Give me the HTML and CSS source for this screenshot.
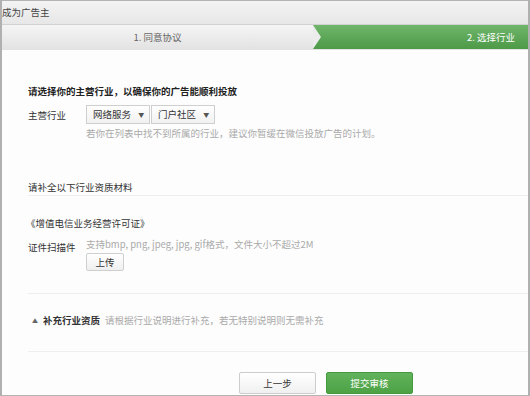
FILE: index.html
```html
<!DOCTYPE html>
<html lang="zh-CN">
  <head>
    <meta charset="UTF-8" />
    <title>成为广告主</title>
    <link rel="stylesheet" href="styles.css">
  </head>
  <body>
    <div class="window">
      <div class="titlebar">成为广告主</div>
      <div class="steps">
        <div class="step step-done">1. 同意协议</div>
        <div class="step step-current">2. 选择行业</div>
      </div>

      <div class="content">
        <div class="heading">请选择你的主营行业，以确保你的广告能顺利投放</div>
        <div class="field">
          <span class="label">主营行业</span>
          <div class="selects">
            <div class="select">网络服务 <span class="caret">▼</span></div>
            <div class="select">门户社区 <span class="caret">▼</span></div>
          </div>
        </div>
        <div class="hint indent">若你在列表中找不到所属的行业，建议你暂缓在微信投放广告的计划。</div>

        <div class="section-title">请补全以下行业资质材料</div>

        <div class="upload-block">
          <div class="license">《增值电信业务经营许可证》</div>
          <div class="field field-top">
            <span class="label label-scan">证件扫描件</span>
            <div class="upload-col">
              <div class="hint">支持bmp, png, jpeg, jpg, gif格式，文件大小不超过2M</div>
              <button class="btn-small">上传</button>
            </div>
          </div>
        </div>

        <div class="extra">
          <span class="up-arrow">▲</span>
          <span class="extra-title">补充行业资质</span>
          <span class="hint">请根据行业说明进行补充，若无特别说明则无需补充</span>
        </div>

        <div class="footer">
          <button class="btn btn-prev">上一步</button>
          <button class="btn btn-submit">提交审核</button>
        </div>
      </div>
    </div>
  </body>
</html>
```

FILE: styles.css
```css
body {
  margin: 0;
  font-family: "Noto Sans CJK SC", "Noto Sans", sans-serif;
  font-size: 9.5px;
  color: #333;
  background: #fff;
}
.window {
  width: 530px;
  height: 396px;
  box-sizing: border-box;
  border: 1px solid #b4b4b4;
  border-left: 2px solid #b0b0b0;
  border-right: 2px solid #b0b0b0;
  background: #fdfdfd;
  overflow: hidden;
}
.titlebar {
  height: 23px;
  line-height: 23px;
  background: linear-gradient(#f3f3f3, #e7e7e7);
  border-bottom: 1px solid #d2d2d2;
  color: #444;
}
.steps {
  display: flex;
  height: 24px;
  line-height: 24px;
  border-bottom: 1px solid #e2e2e2;
}
.step {
  position: relative;
}
.step-done {
  width: 311px;
  text-align: center;
  color: #666;
  background: linear-gradient(#f5f5f5, #e3e3e3);
}
.step-done::after {
  content: "";
  position: absolute;
  right: -8px;
  top: 0;
  border-top: 12px solid transparent;
  border-bottom: 12px solid transparent;
  border-left: 8px solid #ececec;
  z-index: 1;
}
.step-current {
  flex: 1;
  text-align: right;
  padding-right: 13px;
  color: #fff;
  background: linear-gradient(#6fb56a, #4d9a48);
}
.content {
  padding-left: 26px;
}
.heading {
  margin-top: 33px;
  line-height: 16px;
  font-weight: bold;
  color: #222;
}
.field {
  display: flex;
  align-items: center;
  margin-top: 6px;
}
.field-top {
  align-items: flex-start;
  margin-top: 5px;
}
.label {
  width: 58px;
  color: #333;
}
.label-scan {
  padding-top: 3px;
  line-height: 16px;
}
.selects {
  display: flex;
  gap: 1px;
}
.select {
  width: 56px;
  height: 17px;
  line-height: 17px;
  padding-left: 6px;
  border: 1px solid #cfcfcf;
  background: linear-gradient(#fff, #f1f1f1);
  color: #333;
}
.caret {
  font-size: 6px;
  color: #555;
  margin-left: 5px;
  vertical-align: 1px;
}
.hint {
  color: #aaa;
  line-height: 16px;
}
.indent {
  margin-top: 1px;
  padding-left: 58px;
}
.section-title {
  margin-top: 38px;
  line-height: 16px;
  border-bottom: 1px solid #eee;
}
.upload-block {
  padding-top: 19px;
  padding-bottom: 22px;
  border-bottom: 1px solid #eee;
}
.license {
  line-height: 16px;
  margin-left: -2px;
}
.upload-col {
  display: flex;
  flex-direction: column;
  align-items: flex-start;
}
.btn-small {
  margin-top: 1px;
  width: 38px;
  height: 18px;
  padding: 0;
  font-family: inherit;
  font-size: 9.5px;
  color: #333;
  border: 1px solid #cfcfcf;
  border-radius: 2px;
  background: linear-gradient(#fff, #efefef);
}
.extra {
  display: flex;
  align-items: center;
  height: 16px;
  padding-top: 18px;
  padding-bottom: 23px;
  border-bottom: 1px solid #eee;
}
.up-arrow {
  font-size: 6px;
  color: #666;
  margin-left: 4px;
  margin-right: 5px;
}
.extra-title {
  font-weight: bold;
  color: #333;
  margin-right: 5px;
}
.footer {
  display: flex;
  gap: 10px;
  padding-left: 211px;
  margin-top: 20px;
}
.btn {
  height: 22px;
  padding: 0;
  font-family: inherit;
  font-size: 9.5px;
  border-radius: 2px;
}
.btn-prev {
  width: 77px;
  color: #333;
  border: 1px solid #cdcdcd;
  background: linear-gradient(#fff, #f0f0f0);
}
.btn-submit {
  width: 87px;
  color: #fff;
  border: 1px solid #459a40;
  background: linear-gradient(#62b25b, #4ca245);
}
```
